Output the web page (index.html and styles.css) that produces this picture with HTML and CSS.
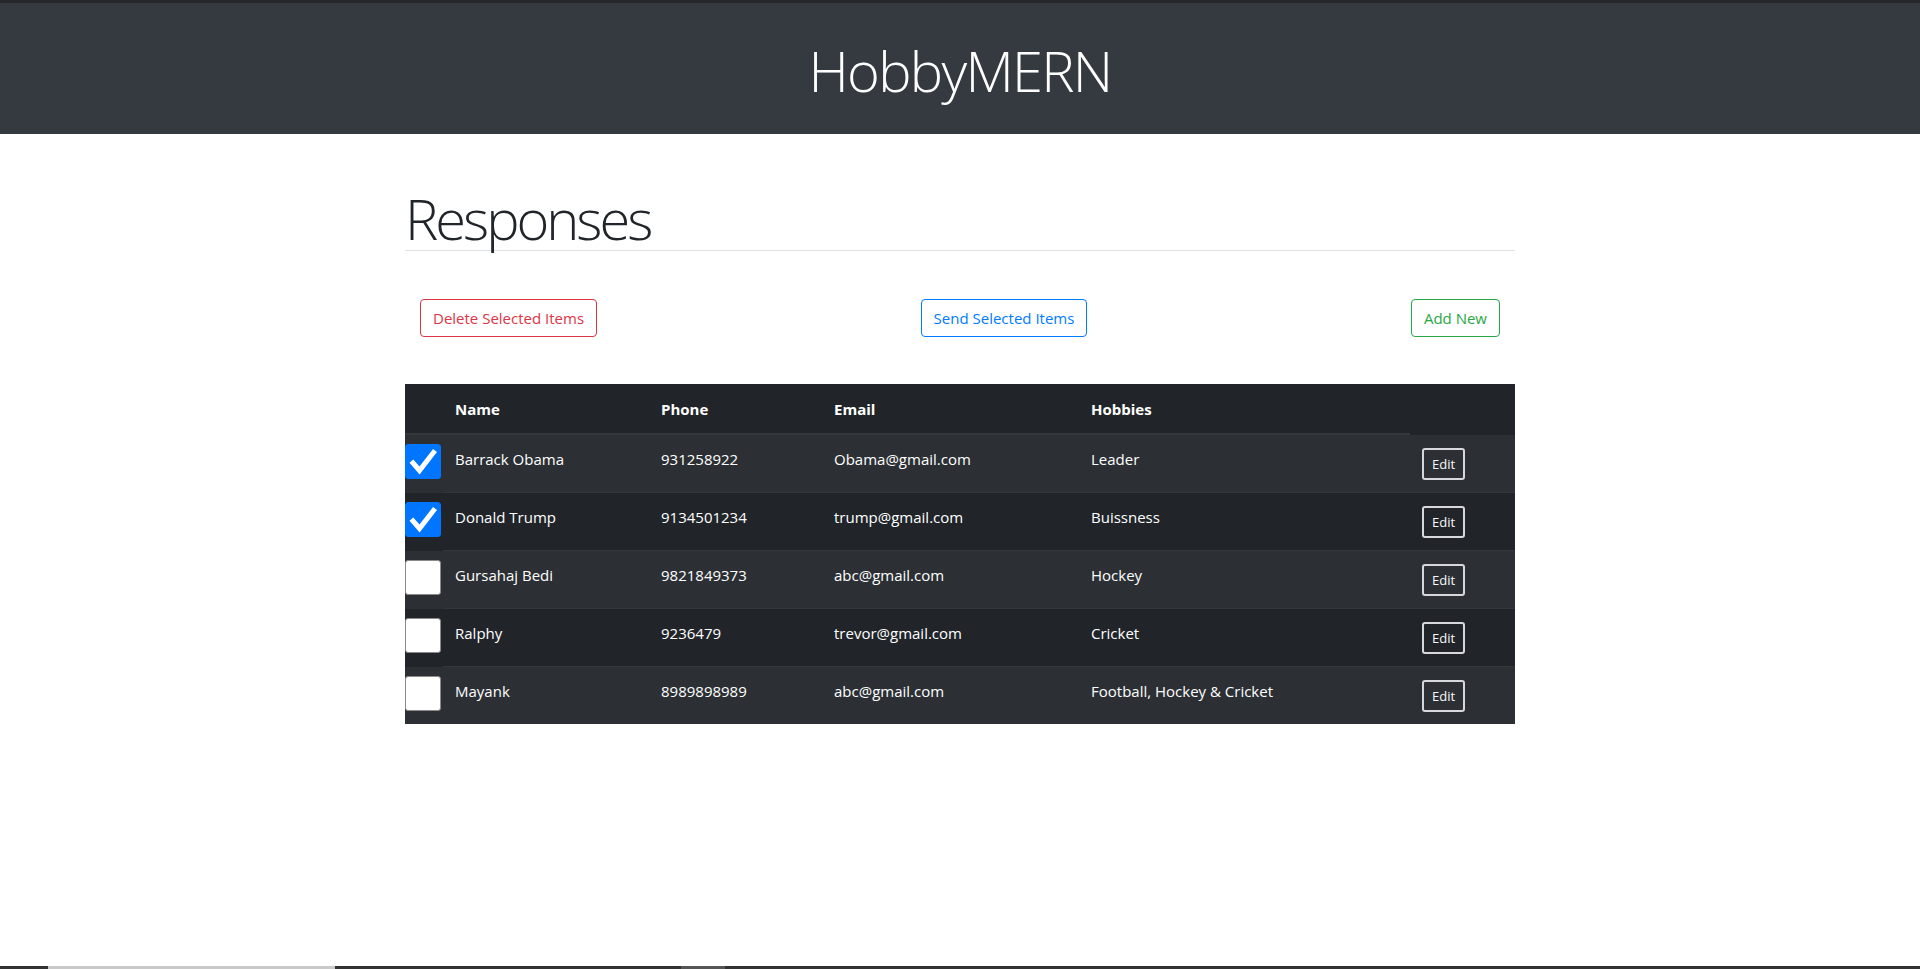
FILE: index.html
```html
<!DOCTYPE html>
<html lang="en">
<head>
<meta charset="utf-8">
<title>HobbyMERN</title>
<link rel="stylesheet" href="styles.css">
</head>
<body>
<div class="topstrip"></div>
<header class="site-header">
  <h1 class="brand">HobbyMERN</h1>
</header>
<main class="container">
  <h1 class="page-title">Responses</h1>
  <div class="actions">
    <button class="btn btn-danger-outline">Delete Selected Items</button>
    <button class="btn btn-primary-outline">Send Selected Items</button>
    <button class="btn btn-success-outline">Add New</button>
  </div>
  <table class="responses">
    <colgroup>
      <col class="c-sel"><col class="c-name"><col class="c-phone"><col class="c-email"><col class="c-hobby"><col class="c-edit">
    </colgroup>
    <thead>
      <tr><th class="sel"></th><th>Name</th><th>Phone</th><th>Email</th><th>Hobbies</th><th class="last"></th></tr>
    </thead>
    <tbody>
      <tr>
        <td class="sel"><span class="check on"><svg viewBox="0 0 36 35" width="36" height="35"><path d="M8 19 L14.5 26.5 L28.5 8.5" fill="none" stroke="#fff" stroke-width="5" stroke-linecap="square"/></svg></span></td>
        <td>Barrack Obama</td><td>931258922</td><td>Obama@gmail.com</td><td>Leader</td>
        <td><button class="btn-edit">Edit</button></td>
      </tr>
      <tr>
        <td class="sel"><span class="check on"><svg viewBox="0 0 36 35" width="36" height="35"><path d="M8 19 L14.5 26.5 L28.5 8.5" fill="none" stroke="#fff" stroke-width="5" stroke-linecap="square"/></svg></span></td>
        <td>Donald Trump</td><td>9134501234</td><td>trump@gmail.com</td><td>Buissness</td>
        <td><button class="btn-edit">Edit</button></td>
      </tr>
      <tr>
        <td class="sel"><span class="check"></span></td>
        <td>Gursahaj Bedi</td><td>9821849373</td><td>abc@gmail.com</td><td>Hockey</td>
        <td><button class="btn-edit">Edit</button></td>
      </tr>
      <tr>
        <td class="sel"><span class="check"></span></td>
        <td>Ralphy</td><td>9236479</td><td>trevor@gmail.com</td><td>Cricket</td>
        <td><button class="btn-edit">Edit</button></td>
      </tr>
      <tr>
        <td class="sel"><span class="check"></span></td>
        <td>Mayank</td><td>8989898989</td><td>abc@gmail.com</td><td>Football, Hockey &amp; Cricket</td>
        <td><button class="btn-edit">Edit</button></td>
      </tr>
    </tbody>
  </table>
</main>
<div class="spacer"></div>
<div class="bottombar"><span class="seg-a"></span><span class="seg-b"></span><span class="seg-c"></span><span class="seg-d"></span><span class="seg-e"></span></div>
</body>
</html>
```

FILE: styles.css
```css
* { box-sizing: border-box; }
html, body { height: 100%; }
body {
  margin: 0;
  min-height: 100vh;
  display: flex;
  flex-direction: column;
  font-family: "Open Sans", "Noto Sans", sans-serif;
  font-size: 15px;
  line-height: 24px;
  color: #212529;
  background: #fff;
}
.topstrip { height: 3px; background: #25272a; flex: none; }
.site-header {
  flex: none;
  background: #343a40;
  padding: 35px 0 32px;
  text-align: center;
}
.brand {
  margin: 0;
  font-size: 56px;
  font-weight: 300;
  line-height: 64px;
  letter-spacing: -1.7px;
  color: #fff;
}
.container {
  flex: none;
  width: 1110px;
  margin: 0 auto;
}
.page-title {
  margin: 52px 0 0;
  font-size: 56px;
  font-weight: 300;
  line-height: 64px;
  letter-spacing: -3px;
  color: #212529;
  border-bottom: 1px solid #dee2e6;
}
.actions {
  display: flex;
  justify-content: space-between;
  padding: 0 15px;
  margin-top: 48px;
}
.btn {
  font-family: inherit;
  font-size: 15px;
  line-height: 24px;
  padding: 6px 12px;
  border: 1px solid;
  border-radius: 4px;
  background: #fff;
  cursor: pointer;
}
.btn-danger-outline { color: #dc3545; border-color: #dc3545; }
.btn-primary-outline { color: #007bff; border-color: #007bff; }
.btn-success-outline { color: #28a745; border-color: #28a745; }

.responses {
  margin-top: 47px;
  width: 1110px;
  table-layout: fixed;
  border-collapse: collapse;
  background: #212529;
  color: #fff;
}
.c-sel { width: 38px; }
.c-name { width: 206px; }
.c-phone { width: 173px; }
.c-email { width: 257px; }
.c-hobby { width: 331px; }
.c-edit { width: 105px; }
.responses th, .responses td {
  padding: 12px;
  text-align: left;
  vertical-align: top;
  border-top: 1px solid #32383e;
}
.responses th {
  padding: 13px 12px 12px;
  font-weight: 700;
  border-top: 0;
  border-bottom: 2px solid #32383e;
}
.responses th.last { border-bottom-color: #212529; }
.responses tbody tr:nth-child(odd) { background: #2c3034; }
.responses td.sel { padding: 9px 0 0; border-top-color: transparent; }
.responses th.sel { padding: 0; }
.check {
  display: block;
  width: 36px;
  height: 35px;
  border-radius: 3px;
  background: #fff;
  border: 1px solid #8a8a8a;
}
.check.on { background: #0075ff; border-color: #0075ff; }
.check svg { display: block; margin: -1px; }
.btn-edit {
  display: block;
  margin-top: 1px;
  height: 32px;
  padding: 0 8px;
  font-family: inherit;
  font-size: 13px;
  line-height: 20px;
  color: #f8f9fa;
  background: transparent;
  border: 2px solid #d6d8db;
  border-radius: 3px;
}
.spacer { flex: 1; }
.bottombar { flex: none; height: 3px; display: flex; background: #333; }
.bottombar span { display: block; height: 3px; }
.seg-a { width: 48px; background: #333; }
.seg-b { width: 287px; background: #c9c9c9; }
.seg-c { width: 346px; background: #333; }
.seg-d { width: 44px; background: #555; }
.seg-e { flex: 1; background: #333; }
```
